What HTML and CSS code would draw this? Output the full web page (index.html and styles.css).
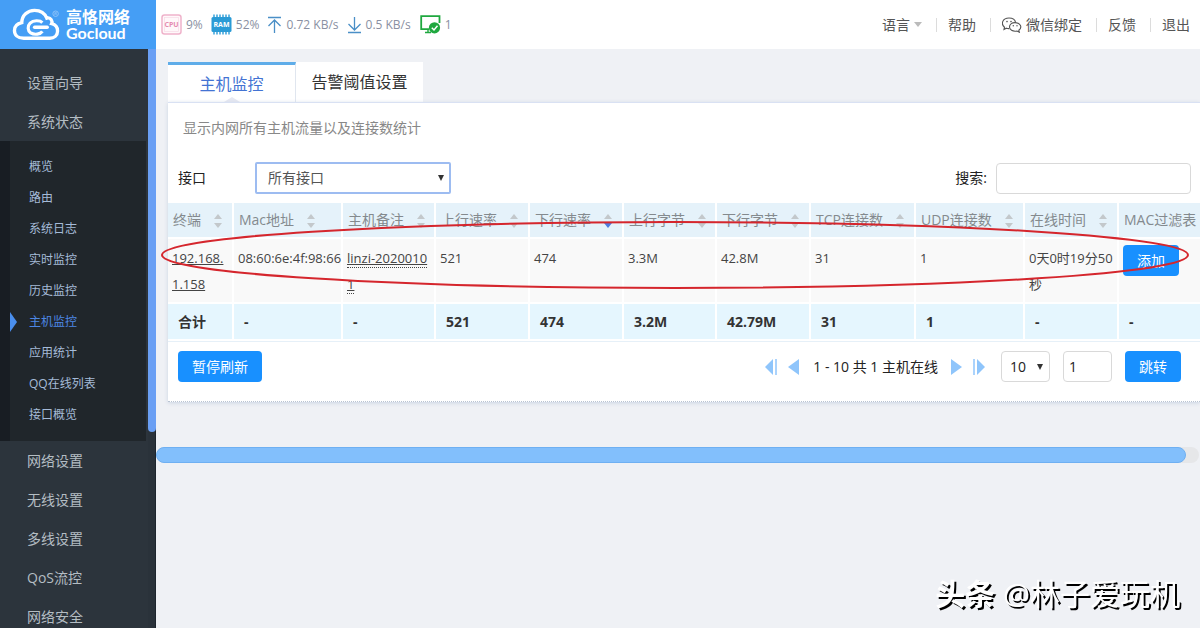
FILE: index.html
```html
<!DOCTYPE html>
<html lang="zh-CN">
<head>
<meta charset="utf-8">
<title>高恪网络 - 主机监控</title>
<link rel="stylesheet" href="styles.css">
</head>
<body>
<div class="app">
  <aside class="sidebar">
    <a class="logo" href="#">
      <svg class="logo-mark" viewBox="0 0 50 34" aria-hidden="true">
        <path d="M12 30.500 C6 30.500 2.500 27 2.500 22.500 C2.500 18.500 5.500 15.500 10 14.500 C10 7 16 2 23 2 C29 2 33.500 5 35.500 10 C37 9.500 39 10 40 11.500 C41 13 41 14.500 40.500 15.500 C44.500 16.500 46.500 19.500 46.500 23 C46.500 27.500 43 30.500 38.500 30.500 Z" fill="none" stroke="#fff" stroke-width="3.400"/>
        <path d="M31 14.500 C29 12.500 22 11.500 18.500 15 C15.500 18 16 23 19 25 C23 27.500 29 26.500 31 23.500" fill="none" stroke="#fff" stroke-width="3.200"/>
        <path d="M23 19.300 H36" stroke="#fff" stroke-width="3.400" stroke-linecap="round"/>
        <circle cx="44.500" cy="5.500" r="2.800" fill="none" stroke="#8cc2f8" stroke-width="1"/>
        <path d="M43.700 7 V4.200 H45.300 V5.500 H43.700 M44.700 5.600 L45.500 7" fill="none" stroke="#8cc2f8" stroke-width=".7"/>
      </svg>
      <span class="logo-text"><b>高恪网络</b><b>Gocloud</b></span>
    </a>
    <div class="side-body">
      <nav class="menu">
        <a href="#">设置向导</a>
        <a href="#">系统状态</a>
        <div class="submenu">
          <a href="#">概览</a>
          <a href="#">路由</a>
          <a href="#">系统日志</a>
          <a href="#">实时监控</a>
          <a href="#">历史监控</a>
          <a class="active" href="#">主机监控</a>
          <a href="#">应用统计</a>
          <a href="#">QQ在线列表</a>
          <a href="#">接口概览</a>
        </div>
        <a href="#">网络设置</a>
        <a href="#">无线设置</a>
        <a href="#">多线设置</a>
        <a href="#">QoS流控</a>
        <a href="#">网络安全</a>
      </nav>
      <div class="side-scroll"><div class="side-thumb"></div></div>
    </div>
  </aside>

  <div class="main">
    <header class="topbar">
      <div class="stats">
        <span class="stat">
          <svg width="21" height="21" viewBox="0 0 21 21" aria-hidden="true"><rect x="1" y="1" width="19" height="19" rx="2.500" fill="#fff8fa" stroke="#efb3cb" stroke-width="1.500"/><rect x="3.500" y="3.500" width="14" height="14" fill="none" stroke="#f7dbe6" stroke-width=".7"/><text class="chip-cpu" x="10.500" y="13" text-anchor="middle">CPU</text></svg>9%</span>
        <span class="stat">
          <svg width="21" height="21" viewBox="0 0 21 21" aria-hidden="true"><path d="M3 .5V20.500M6 .5V20.500M9 .5V20.500M12 .5V20.500M15 .5V20.500M18 .5V20.500" stroke="#2a9bd6" stroke-width="1.400"/><rect x=".5" y="3" width="20" height="15" rx="1.500" fill="#2a9bd6"/><text class="chip-ram" x="10.500" y="13" text-anchor="middle">RAM</text></svg>52%</span>
        <span class="stat">
          <svg width="15" height="18" viewBox="0 0 15 18" aria-hidden="true"><path d="M1 1.500H14M7.500 17V4.500M1.500 10L7.500 4L13.500 10" fill="none" stroke="#4a8fc7" stroke-width="1.300"/></svg>0.72 KB/s</span>
        <span class="stat">
          <svg width="15" height="18" viewBox="0 0 15 18" aria-hidden="true"><path d="M1 16.500H14M7.500 1V13.500M1.500 8L7.500 14L13.500 8" fill="none" stroke="#4a8fc7" stroke-width="1.300"/></svg>0.5 KB/s</span>
        <span class="stat monitor">
          <svg width="21" height="19" viewBox="0 0 21 19" aria-hidden="true"><path d="M9 14.200H1.200V1.200H19.500V8" fill="none" stroke="#1fa83f" stroke-width="1.800"/><path d="M5 17.500H11M8 14V17.500" stroke="#1fa83f" stroke-width="1.400"/><circle cx="14.500" cy="12.800" r="5.600" fill="#1fa83f"/><path d="M11.800 12.800L14 15L17.500 10.800" fill="none" stroke="#fff" stroke-width="1.500"/></svg>1</span>
      </div>
      <nav class="toplinks">
        <a href="#">语言<i class="caret"></i></a>
        <a href="#">帮助</a>
        <a href="#"><svg class="wechat" width="20" height="16" viewBox="0 0 20 16" aria-hidden="true"><path d="M7.200 11.600C6.200 11.700 5.200 11.500 4.300 11.200L2 12.500L2.500 10.200C-1.500 7 .5 1 7 1C11 1 13.200 3.200 13.600 5.600" fill="none" stroke="#555" stroke-width="1.100"/><path d="M13 5.600C9.800 5.600 7.500 7.500 7.500 10C7.500 12.700 10.500 14.800 15 14L17.300 15.200L16.800 13.200C20.800 10.200 18.200 5.600 13 5.600Z" fill="none" stroke="#555" stroke-width="1.100"/><circle cx="5" cy="4.600" r=".8" fill="#555"/><circle cx="9" cy="4.600" r=".8" fill="#555"/><circle cx="11.300" cy="8.800" r=".7" fill="#555"/><circle cx="15" cy="8.800" r=".7" fill="#555"/></svg>微信绑定</a>
        <a href="#">反馈</a>
        <a href="#">退出</a>
      </nav>
    </header>

    <div class="content">
      <div class="tabs">
        <button class="tab current" type="button">主机监控</button>
        <button class="tab" type="button">告警阈值设置</button>
      </div>
      <section class="card">
        <p class="desc">显示内网所有主机流量以及连接数统计</p>
        <div class="filters">
          <label for="iface">接口</label>
          <span class="select-box wide"><select id="iface"><option>所有接口</option></select></span>
          <label class="search-label" for="search">搜索:</label>
          <input class="field search" id="search" type="text">
        </div>
        <table class="hosts">
          <colgroup>
            <col class="c66"><col class="c109"><col class="c93"><col class="c94"><col class="c94"><col class="c93"><col class="c94"><col class="c105"><col class="c109"><col class="c94"><col>
          </colgroup>
          <thead>
            <tr>
              <th>终端<i class="sort"></i></th>
              <th>Mac地址<i class="sort"></i></th>
              <th>主机备注<i class="sort"></i></th>
              <th>上行速率<i class="sort"></i></th>
              <th>下行速率<i class="sort desc-on"></i></th>
              <th>上行字节<i class="sort"></i></th>
              <th>下行字节<i class="sort"></i></th>
              <th>TCP连接数<i class="sort"></i></th>
              <th>UDP连接数<i class="sort"></i></th>
              <th>在线时间<i class="sort"></i></th>
              <th>MAC过滤表</th>
            </tr>
          </thead>
          <tbody>
            <tr>
              <td><a href="#">192.168.<wbr>1.158</a></td>
              <td class="mac">08:60:6e:4f:98:66</td>
              <td><a class="note" href="#">linzi-2020010<wbr>1</a></td>
              <td>521</td>
              <td>474</td>
              <td>3.3M</td>
              <td>42.8M</td>
              <td>31</td>
              <td>1</td>
              <td>0天0时19分50秒</td>
              <td><button class="btn small" type="button">添加</button></td>
            </tr>
          </tbody>
          <tfoot>
            <tr><td>合计</td><td>-</td><td>-</td><td>521</td><td>474</td><td>3.2M</td><td>42.79M</td><td>31</td><td>1</td><td>-</td><td>-</td></tr>
          </tfoot>
        </table>
        <div class="actions">
          <button class="btn" type="button">暂停刷新</button>
          <div class="pager">
            <button class="arrow" type="button" aria-label="首页"><svg width="12" height="16" viewBox="0 0 12 16"><path d="M8 0V16L0 8Z" fill="#8fc5fb"/><path d="M11 0V16" stroke="#8fc5fb" stroke-width="1.500"/></svg></button>
            <button class="arrow" type="button" aria-label="上一页"><svg width="12" height="16" viewBox="0 0 12 16"><path d="M11 0V16L0 8Z" fill="#8fc5fb"/></svg></button>
            <span class="pager-text">1 - 10 共 1 主机在线</span>
            <button class="arrow" type="button" aria-label="下一页"><svg width="12" height="16" viewBox="0 0 12 16"><path d="M1 0V16L12 8Z" fill="#8fc5fb"/></svg></button>
            <button class="arrow" type="button" aria-label="末页"><svg width="12" height="16" viewBox="0 0 12 16"><path d="M4 0V16L12 8Z" fill="#8fc5fb"/><path d="M1 0V16" stroke="#8fc5fb" stroke-width="1.500"/></svg></button>
            <span class="select-box size"><select aria-label="每页数量"><option>10</option></select></span>
            <input class="field page" type="text" value="1" aria-label="页码">
            <button class="btn small" type="button">跳转</button>
          </div>
        </div>
        <svg class="highlight" viewBox="0 0 1030 70" preserveAspectRatio="none" aria-hidden="true"><ellipse cx="515" cy="35" rx="513" ry="33" fill="none" stroke="#d5262d" stroke-width="2" vector-effect="non-scaling-stroke"/></svg>
      </section>
    </div>
    <div class="hscroll"><div class="hthumb"></div></div>
  </div>
</div>
<div class="watermark"><b>头条</b> @林子爱玩机</div>
</body>
</html>
```
FILE: styles.css
```css
* { box-sizing: border-box; }

body {
  margin: 0;
  font: 14px/20px "Open Sans", "Noto Sans CJK SC", sans-serif;
  color: #333;
  background: #eff1f5;
}

a { color: inherit; text-decoration: none; }

button, input, select { font: inherit; color: inherit; margin: 0; }

button { border: 0; cursor: pointer; }

.app { display: flex; height: 100vh; overflow: hidden; }

/* Sidebar */
.sidebar {
  flex: none;
  width: 156px;
  display: flex;
  flex-direction: column;
  background: #2c343c;
}

.logo {
  flex: none;
  display: flex;
  align-items: center;
  gap: 5px;
  height: 49px;
  padding-left: 12px;
  background: #459ef5;
  color: #fff;
}

.logo-mark { width: 49px; height: 34px; flex: none; }

.logo-text {
  display: flex;
  flex-direction: column;
  font-family: Lato, "Noto Sans CJK SC", sans-serif;
  font-size: 16px;
  line-height: 16px;
  white-space: nowrap;
}

.side-body { flex: 1; min-height: 0; display: flex; overflow: hidden; }

.menu { width: 146px; padding-top: 14px; }

.menu a { display: block; padding-left: 27px; line-height: 39px; color: #b4bdc3; }

.submenu {
  padding: 10px 0 11px;
  background: #20262b;
  border-left: 10px solid #181d23;
}

.submenu a {
  position: relative;
  padding-left: 19px;
  font-size: 12px;
  line-height: 31px;
  color: #a5bbd8;
}

.menu .active { color: #4d86e4; }

.active::before {
  content: "";
  position: absolute;
  left: 0;
  top: 6px;
  border: solid transparent;
  border-width: 10px 0 10px 7px;
  border-left-color: #4a8fee;
}

.side-scroll { width: 8px; margin-left: 2px; border-right: 1px solid #1d252d; background: #2a323a; }

.side-thumb { height: 383px; margin-right: -1px; background: #6a9ff4; border-radius: 0 0 4px 4px; }

/* Main column */
.main { flex: 1; min-width: 0; overflow: hidden; }

.topbar {
  display: flex;
  justify-content: space-between;
  align-items: center;
  height: 49px;
  padding: 0 10px 0 5px;
  background: #fff;
}

.stats { display: flex; gap: 8px; font-size: 12px; line-height: 22px; color: #8a90a2; }

.stat { display: flex; align-items: center; gap: 4px; white-space: nowrap; }

.monitor { margin-left: 1px; }

.chip-cpu, .chip-ram { font: bold 7px "Open Sans", sans-serif; fill: #e58bb0; }

.chip-ram { fill: #fff; }

.toplinks { display: flex; color: #555; }

.toplinks a {
  display: flex;
  align-items: center;
  padding-left: 11px;
  white-space: nowrap;
  height: 14px;
}

.toplinks a + a { margin-left: 14px; border-left: 1px solid #dcdcdc; }

.caret { border: 4px solid transparent; border-top: 5px solid #bbb; border-bottom: 0; margin-left: 4px; }

.wechat { margin-right: 4px; }

.content { padding: 13px 0 0 12px; }

.tabs { display: flex; height: 40px; }

.tab {
  position: relative;
  padding: 0 15px;
  min-width: 127px;
  font-size: 16px;
  background: #fff;
  color: #333;
}

.tab.current {
  min-width: 128px;
  border-top: 3px solid #5fade9;
  border-right: 1px solid #e0e6ef;
  color: #4373d3;
}

.tab.current::after {
  content: "";
  position: absolute;
  left: 56px;
  bottom: 0;
  border: 8px solid transparent;
  border-top: 0;
  border-bottom: 5px solid #e6e8f2;
}

.card {
  position: relative;
  padding-top: 13px;
  background: #fff;
  border-top: 1px solid #d9e1f3;
  border-bottom: 1px dotted #b9c4d2;
  box-shadow: 0 1px 4px #c9d3e2;
}

.desc { margin: 0 15px; line-height: 24px; color: #888; }

.filters { display: flex; align-items: center; padding: 22px 9px 9px 10px; color: #222; }

.select-box { position: relative; display: inline-flex; }

.select-box::after {
  content: "";
  position: absolute;
  right: 7px;
  top: 13px;
  border: 3px solid transparent;
  border-top: 6px solid #333;
  border-bottom: 0;
  pointer-events: none;
}

.select-box select {
  appearance: none;
  width: 100%;
  height: 31px;
  padding: 0 8px;
  border: 1px solid #d9d9d9;
  border-radius: 4px;
  background: #fff;
}

.wide { width: 196px; margin-left: 49px; }

.select-box.wide select { height: 32px; padding: 0 11px; border: 2px solid #9dbcf1; border-radius: 2px; color: #555; }

.search-label { margin-left: auto; }

.field { height: 31px; border: 1px solid #d9d9d9; border-radius: 4px; padding: 0 5px; background: #fff; }

.search { width: 195px; margin-left: 9px; }

/* Host table */
.hosts { width: 100%; table-layout: fixed; border-collapse: separate; border-spacing: 0; }

.c66 { width: 66px; }
.c93 { width: 93px; }
.c94 { width: 94px; }
.c105 { width: 105px; }
.c109 { width: 109px; }

.hosts th, .hosts td {
  border: solid #fff;
  border-width: 0 2px 2px 0;
  text-align: left;
}

.hosts th {
  height: 36px;
  padding: 0 0 0 5px;
  font-weight: normal;
  white-space: nowrap;
  color: #848a8e;
  background: #e5f2fa;
}

.hosts th:last-child, .hosts td:last-child { border-right: 0; }

.sort { display: inline-flex; flex-direction: column; gap: 4px; margin-left: 13px; vertical-align: middle; }

.sort::before, .sort::after { content: ""; border: 4px solid transparent; }

.sort::before { border-top: 0; border-bottom: 5px solid #c3c8cb; }

.sort::after { border-bottom: 0; border-top: 5px solid #c3c8cb; }

.desc-on::after { border-top-color: #4d7ce0; }

.hosts tbody td {
  padding: 6px 1px 5px 4px;
  height: 65px;
  vertical-align: top;
  font-size: 13px;
  line-height: 26px;
  color: #444;
  background: #f9f9f9;
}

.hosts tbody .mac { white-space: nowrap; }

.hosts tbody a { text-decoration: underline; }

.hosts .note { border-bottom: 1px dotted #444; white-space: normal; }

.hosts tfoot td { height: 37px; padding: 0 10px; font-weight: bold; background: #e5f6fe; }

.btn {
  height: 31px;
  padding: 0 14px;
  border-radius: 4px;
  background: #1890ff;
  color: #fff;
  font-size: 14px;
  line-height: 20px;
  white-space: nowrap;
}

.actions {
  display: flex;
  justify-content: space-between;
  align-items: center;
  padding: 9px 19px 19px 10px;
  border-top: 1px solid #e6f0f8;
}

.pager { display: flex; align-items: center; color: #222; }

.arrow { display: flex; padding: 0; background: none; margin-right: 11px; }

.pager-text { margin: 0 12px 0 2px; white-space: nowrap; }

.size { width: 49px; margin: 0 13px 0 5px; }

.page { width: 49px; margin-right: 13px; }

.highlight {
  position: absolute;
  left: -8px;
  top: 117px;
  width: calc(100% - 2px);
  height: 70px;
  pointer-events: none;
}

/* Horizontal scrollbar */
.hscroll { margin: 45px 1px 0 0; border-radius: 8px; background: #e6e7e9; }

.hthumb { width: calc(100% - 13px); height: 16px; border: 1px solid #6fb0f2; border-radius: 8px; background: #82bffc; }

.watermark {
  position: fixed;
  right: 20px;
  bottom: 12px;
  font-size: 30px;
  line-height: 44px;
  color: #fff;
  text-shadow: 2px 2px 0 #000;
  white-space: nowrap;
}
```
